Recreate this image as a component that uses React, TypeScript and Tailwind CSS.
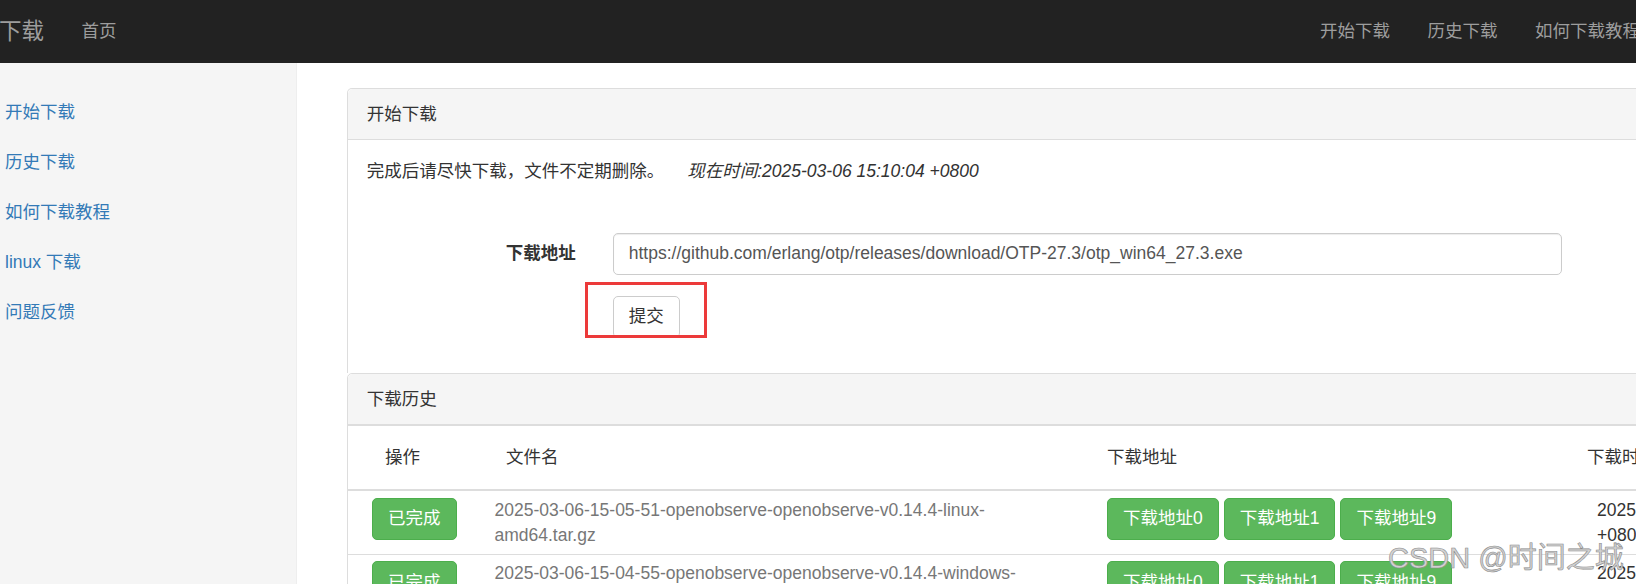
const sideLinks = ["开始下载", "历史下载", "如何下载教程", "linux 下载", "问题反馈"];
const topLinks = ["开始下载", "历史下载", "如何下载教程"];

const rows = [
  {
    name: ["2025-03-06-15-05-51-openobserve-openobserve-v0.14.4-linux-", "amd64.tar.gz"],
    date: ["2025-03-06 15:05:51", "+0800"],
  },
  {
    name: ["2025-03-06-15-04-55-openobserve-openobserve-v0.14.4-windows-", "amd64.zip"],
    date: ["2025-03-06 15:04:55", "+0800"],
  },
];

function GreenButton({ children }: { children: React.ReactNode }) {
  return (
    <span className="inline-flex h-[42px] items-center whitespace-nowrap rounded-[5px] border border-[#4cae4c] bg-[#5cb85c] px-[15px] text-white">
      {children}
    </span>
  );
}

export default function App() {
  return (
    <div className="relative h-[584px] w-[1636px] overflow-hidden bg-white font-['Liberation_Sans','Noto_Sans_CJK_SC',sans-serif] text-[17.5px] leading-[25px] text-[#333]">
      {/* Navbar */}
      <header className="flex h-[63px] items-center whitespace-nowrap bg-[#222] text-[#9d9d9d]">
        <span className="ml-[-1px] pr-[18.75px] text-[22.5px]">下载</span>
        <a className="px-[18.75px]">首页</a>
        <nav className="ml-[1166px] flex shrink-0">
          {topLinks.map((l) => (
            <a key={l} className="shrink-0 px-[18.75px]">
              {l}
            </a>
          ))}
        </nav>
      </header>

      <div className="flex h-[521px]">
        {/* Sidebar */}
        <aside className="w-[297px] shrink-0 border-r border-[#eee] bg-[#f5f5f5] pt-[24px]">
          {sideLinks.map((l) => (
            <div key={l} className="py-[12.6px] pl-[5px] text-[#337ab7]">
              {l}
            </div>
          ))}
        </aside>

        {/* Main */}
        <main className="shrink-0 pl-[50px] pt-[25px]">
          <section className="w-[1400px] rounded-t-[5px] border border-b-0 border-[#ddd]">
            <div className="rounded-t-[5px] border-b border-[#ddd] bg-[#f5f5f5] px-[18.75px] py-[12.5px]">开始下载</div>
            <div className="px-[18.75px] pt-[18.75px] pb-[35.5px]">
              <p className="whitespace-nowrap">
                完成后请尽快下载，文件不定期删除。
                <i className="ml-[23px]">现在时间:2025-03-06 15:10:04 +0800</i>
              </p>
              <div className="mt-[49px] flex items-center">
                <label className="w-[209px] text-right font-bold">下载地址</label>
                <div className="ml-[37px] flex h-[42px] w-[949px] items-center rounded-[5px] border border-[#ccc] px-[15px] text-[#555] shadow-[inset_0_1px_1px_rgba(0,0,0,0.075)]">
                  https://github.com/erlang/otp/releases/download/OTP-27.3/otp_win64_27.3.exe
                </div>
              </div>
              <div className="ml-[246px] mt-[21px]">
                <div className="relative w-fit">
                  <button className="flex h-[42px] items-center rounded-[5px] border border-[#ccc] bg-white px-[15px] text-[#333]">
                    提交
                  </button>
                  <div className="absolute left-[-28px] top-[-14px] h-[56px] w-[122px] border-[3px] border-[#ec3a3a]" />
                </div>
              </div>
            </div>
          </section>

          <section className="w-[1400px] rounded-t-[5px] border border-[#ddd]">
            <div className="rounded-t-[5px] border-b-2 border-[#ddd] bg-[#f5f5f5] px-[18.75px] py-[12.5px]">下载历史</div>
            <div className="grid h-[65px] grid-cols-[136px_613px_480px_220px] items-center border-b-2 border-[#ddd]">
              <div className="pl-[37px]">操作</div>
              <div className="pl-[22px]">文件名</div>
              <div className="pl-[10px]">下载地址</div>
              <div className="whitespace-nowrap pl-[10px]">下载时间</div>
            </div>
            {rows.map((r, i) => (
              <div
                key={i}
                className={`grid grid-cols-[136px_613px_480px_220px] py-[6.25px] ${i > 0 ? "border-t border-[#ddd]" : ""}`}
              >
                <div className="pl-[24px]">
                  <GreenButton>已完成</GreenButton>
                </div>
                <div className="whitespace-nowrap pl-[10.5px] text-[#777]">
                  {r.name[0]}
                  <br />
                  {r.name[1]}
                </div>
                <div className="flex gap-[5px] pl-[10px]">
                  <GreenButton>下载地址0</GreenButton>
                  <GreenButton>下载地址1</GreenButton>
                  <GreenButton>下载地址9</GreenButton>
                </div>
                <div className="whitespace-nowrap pl-[20px]">
                  {r.date[0]}
                  <br />
                  {r.date[1]}
                </div>
              </div>
            ))}
          </section>
        </main>
      </div>

      {/* Watermark */}
      <div className="pointer-events-none absolute left-[1388px] top-[544px] whitespace-nowrap text-[29px] leading-none text-[#d2d2d2] [-webkit-text-stroke:0.6px_#8c8c8c]">
        CSDN @时间之城
      </div>
    </div>
  );
}
